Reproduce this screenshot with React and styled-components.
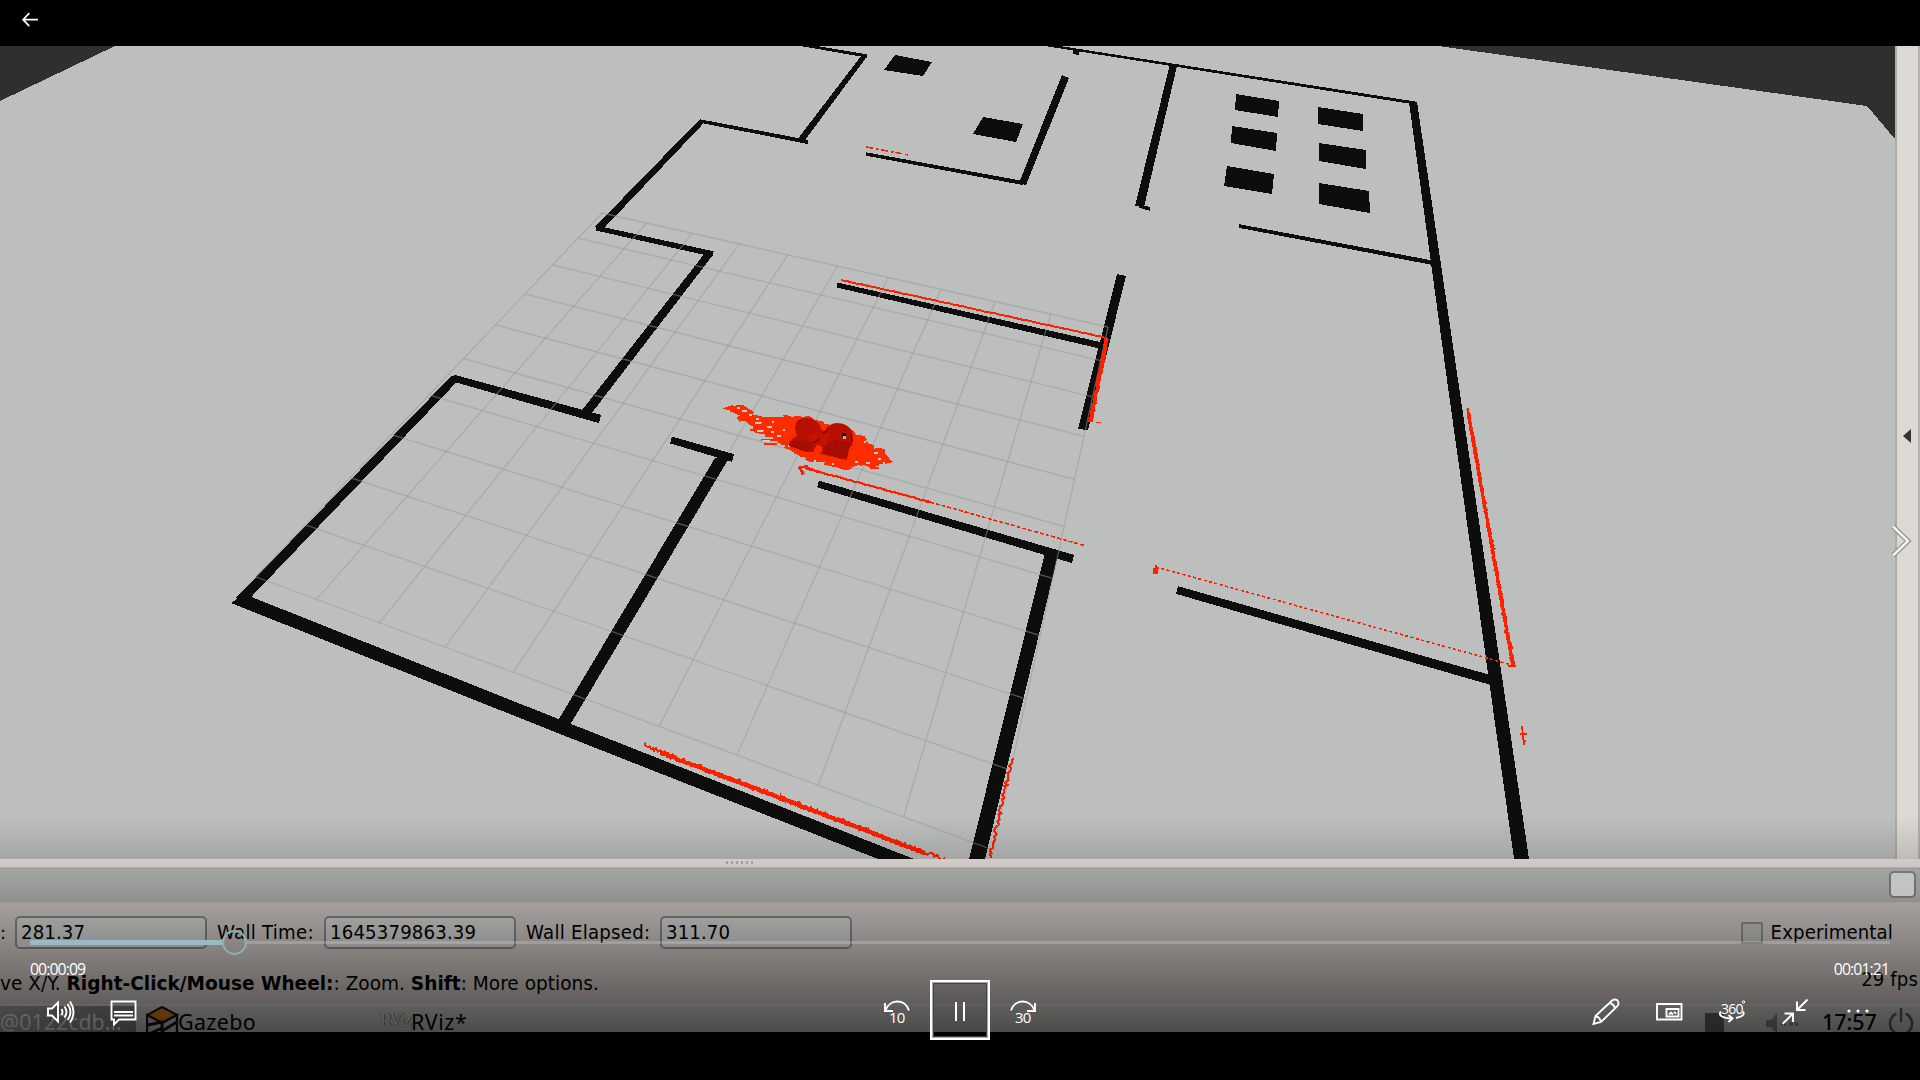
import React from "react";
import styled, { createGlobalStyle } from "styled-components";

const GlobalStyle = createGlobalStyle`
  * { box-sizing: border-box; }
  html, body { margin: 0; background: #000; overflow: hidden; }
`;

/* ---------- map geometry ---------- */

const WALL = "#0c0d0c";
const RED = "#ff2000";

const pts = (list) => list.map((p) => p.join(",")).join(" ");

// [x1, y1, thickness1, x2, y2, thickness2]
const walls = [
  [803, 45, 2.8, 867, 56, 3.2],
  [865, 55, 5, 801, 140, 6.5],
  [700, 121, 3.4, 808, 142, 4],
  [702, 121, 5.5, 598, 229, 7.5],
  [596, 228, 5, 713, 254, 5.5],
  [709, 254, 7.5, 585, 414, 9.5],
  [453, 378, 7, 600, 419, 8.5],
  [455, 378, 8, 240, 601, 10.5],
  [671, 440, 7, 733, 458, 8],
  [818, 484, 7, 1073, 559, 8.5],
  [837, 285, 5, 1103, 346, 6.5],
  [866, 154, 3.4, 1023, 183, 4],
  [1046, 45, 2.4, 1415, 103, 3],
  [1139, 206, 3.5, 1150, 209, 3.5],
  [1239, 226, 3.6, 1434, 263, 4.4],
  [1177, 590, 8, 1494, 681, 9.5],
];

const blocks = [
  [[231, 603], [244, 594], [566, 722], [914, 859], [878, 859], [560, 734]],
  [[715, 458], [729, 458], [570, 725], [553, 729]],
  [[1045, 553], [1058, 555], [985, 859], [969, 859]],
  [[1117, 274], [1126, 276], [1088, 430], [1078, 429]],
  [[1062, 75], [1069, 78], [1026, 185], [1019, 183]],
  [[1170, 64], [1177, 66], [1144, 207], [1135, 206]],
  [[1409, 102], [1417, 102], [1458, 380], [1529, 859], [1514, 859], [1447, 380]],
  [[1073, 50], [1080, 50], [1079, 55], [1073, 54]],
  [[895, 55], [932, 62], [923, 76], [884, 70]],
  [[983, 117], [1023, 124], [1016, 142], [973, 134]],
  [[1236, 94], [1279, 101], [1278, 117], [1235, 110]],
  [[1318, 107], [1363, 114], [1363, 131], [1318, 124]],
  [[1232, 126], [1277, 133], [1276, 151], [1231, 143]],
  [[1319, 143], [1366, 150], [1366, 169], [1319, 161]],
  [[1227, 166], [1274, 174], [1272, 194], [1224, 186]],
  [[1319, 183], [1369, 191], [1370, 213], [1319, 204]],
];

const wallPolygon = ([x1, y1, a, x2, y2, b]) => {
  const len = Math.hypot(x2 - x1, y2 - y1);
  const nx = -(y2 - y1) / len / 2;
  const ny = (x2 - x1) / len / 2;
  return [
    [x1 + nx * a, y1 + ny * a],
    [x2 + nx * b, y2 + ny * b],
    [x2 - nx * b, y2 - ny * b],
    [x1 - nx * a, y1 - ny * a],
  ];
};

// Projects the unit square onto the floor quadrilateral.
const projector = ([x0, y0], [x1, y1], [x2, y2], [x3, y3]) => {
  const dx1 = x1 - x2, dx2 = x3 - x2, sx = x0 - x1 + x2 - x3;
  const dy1 = y1 - y2, dy2 = y3 - y2, sy = y0 - y1 + y2 - y3;
  const det = dx1 * dy2 - dx2 * dy1;
  const g = (sx * dy2 - dx2 * sy) / det;
  const h = (dx1 * sy - sx * dy1) / det;
  return (u, v) => {
    const w = g * u + h * v + 1;
    return [
      ((x1 - x0 + g * x1) * u + (x3 - x0 + h * x3) * v + x0) / w,
      ((y1 - y0 + g * y1) * u + (y3 - y0 + h * y3) * v + y0) / w,
    ];
  };
};

const floor = projector([602, 213], [1108, 327], [993, 850], [256, 577]);
const steps = Array.from({ length: 11 }, (_, i) => i);
const gridRows = steps.map((i) => [floor(0, i / 10), floor(1, i / 10)]);
const gridColumns = steps.map((i) => [floor(i / 10, 0), floor(i / 10, 1)]);
// The middle column runs beneath the inner wall.
const coveredLines = [gridColumns[5]];
const openLines = [...gridRows, ...gridColumns.filter((_, i) => i !== 5)];

const noise = (seed) => {
  let s = seed;
  return () => {
    s = (s * 16807) % 2147483647;
    return s / 2147483647;
  };
};

// Short cross strokes scattered along a laser hit line.
const scan = (x1, y1, x2, y2, spread1, spread2, seed) => {
  const rnd = noise(seed);
  const len = Math.hypot(x2 - x1, y2 - y1);
  const n = Math.round(len / 1.7);
  const out = [];
  for (let i = 0; i <= n; i += 1) {
    const t = i / n;
    const sp = spread1 + (spread2 - spread1) * t;
    const nx = (-(y2 - y1) / len) * (rnd() - 0.5) * 2 * sp;
    const ny = ((x2 - x1) / len) * (rnd() - 0.5) * 2 * sp;
    out.push([(x1 + (x2 - x1) * t + nx).toFixed(1), (y1 + (y2 - y1) * t + ny).toFixed(1)]);
  }
  return out;
};

const scans = [
  { p: scan(643, 745, 947, 861, 2.4, 2.2, 11), w: 2 },
  { p: scan(660, 752.5, 925, 853, 0.7, 0.7, 15), w: 4.2 },
  { p: scan(1012, 758, 990, 858, 2, 2, 23), w: 2 },
  { p: scan(1468, 408, 1513, 666, 0.8, 2, 37), w: 2.4 },
  { p: scan(1468, 412, 1513, 666, 0.2, 0.4, 39), w: 3.4 },
  { p: scan(1107, 338, 1091, 420, 0.6, 0.9, 41), w: 3.8 },
  { p: scan(841, 280, 1107, 338, 0.3, 0.3, 43), w: 2 },
  { p: scan(805, 468, 930, 502, 0.5, 0.3, 47), w: 2.2 },
];

const cloudOutline = [
  [726, 408], [736, 404], [752, 408], [757, 416], [768, 418], [782, 417], [798, 416], [812, 417],
  [832, 424], [850, 430], [866, 437], [870, 446], [884, 450], [882, 454], [891, 462], [884, 464],
  [872, 467], [858, 465], [846, 470], [826, 465], [808, 460], [796, 454], [784, 449], [774, 439],
  [760, 434], [750, 427], [740, 418], [733, 411],
];

const cloudRnd = noise(97);
const jag = [];
cloudOutline.forEach((a, i) => {
  const b = cloudOutline[(i + 1) % cloudOutline.length];
  for (let k = 0; k < 4; k += 1) {
    const t = k / 4;
    jag.push([
      (a[0] + (b[0] - a[0]) * t + (cloudRnd() - 0.5) * 8).toFixed(1),
      (a[1] + (b[1] - a[1]) * t + (cloudRnd() - 0.5) * 3).toFixed(1),
    ]);
  }
});

const gaps = [
  [744, 411, 10], [738, 408, 6], [750, 415, 6], [758, 423, 14], [769, 427, 10], [760, 431, 14],
  [779, 436, 8], [766, 441, 14], [773, 422, 5], [789, 446, 5], [856, 462, 6], [868, 463, 7],
  [879, 459, 6], [876, 453, 7], [865, 442, 4], [833, 464, 3], [815, 461, 4], [884, 463, 4],
  [772, 432, 6], [784, 430, 4], [757, 419, 6],
];
const streaks = [
  [750, 429, 20], [763, 417, 14], [761, 439, 20], [764, 443, 13], [730, 410, 14], [870, 467, 9],
  [873, 450, 12], [762, 423, 9], [726, 408, 9],
];

/* ---------- page parts ---------- */

const Player = styled.main`
  position: relative;
  width: 1920px;
  height: 1080px;
  padding: 46px 0 48px;
  background: #000;
  overflow: hidden;
`;

const Frame = styled.section`
  display: flex;
  flex-direction: column;
  height: 986px;
  overflow: hidden;
  background: #e0dad6;
  color: #000;
  font: 18.15px/22px "DejaVu Sans", sans-serif;
  white-space: nowrap;
`;

const Viewport = styled.div`
  display: flex;
  height: 813px;
  flex: none;
`;

const MapCanvas = styled.svg`
  display: block;
  width: 1895px;
  height: 813px;
`;

const DockStrip = styled.aside`
  display: flex;
  flex-direction: column;
  align-items: center;
  width: 25px;
  padding: 383px 2px 0 0;
  background: #dcd8d3;
  border-left: 2px solid #aeaba7;
  border-right: 2px solid #b5b1ac;
`;

const DockArrow = styled.span`
  border: 7px solid transparent;
  border-left: 0;
  border-right: 8px solid #35342f;
`;

const Splitter = styled.div`
  display: flex;
  justify-content: center;
  height: 9px;
  flex: none;
  padding: 2px 441px 0 0;
  background: #f3eae6;
  border-bottom: 1px solid #d4d0cd;
`;

const Grip = styled.i`
  width: 27px;
  height: 3px;
  background: repeating-linear-gradient(90deg, #bfbab7 0 2px, transparent 2px 5px);
`;

const EmptyPanel = styled.div`
  display: flex;
  justify-content: flex-end;
  align-items: flex-start;
  height: 34px;
  flex: none;
  padding: 2px 4px 0;
  background: #c2c4c2;
  border-top: 1px solid #b5b6b5;
`;

const PanelButton = styled.span`
  width: 27px;
  height: 27px;
  border: 2px solid #8e8e8d;
  border-radius: 5px;
  background: linear-gradient(#eeeded, #fff);
`;

const TimeRow = styled.div`
  display: flex;
  align-items: center;
  height: 62px;
  flex: none;
  padding: 0 27px 2px 0;
  border-top: 1px solid #d4d0cd;
`;

const Tall = styled.span`
  display: inline-block;
  transform: scaleY(1.07);
  letter-spacing: ${(p) => p.$spacing || 0}px;
`;

const FieldLabel = styled.span`
  width: ${(p) => p.$width}px;
  padding-left: ${(p) => p.$indent}px;
`;

const TimeField = styled.span`
  width: 192px;
  height: 33px;
  padding: 4px 4px;
  border: 2px solid #93918e;
  border-radius: 5px;
  background: #e6e7e5;
`;

const Checkbox = styled.span`
  width: 22px;
  height: 22px;
  margin: 0 8px 0 auto;
  border: 2px solid #9c9c98;
  background: #d3d5ce;
`;

const StatusRow = styled.div`
  display: flex;
  justify-content: space-between;
  height: 40px;
  flex: none;
  padding: 9px 2px 0 0;
`;

const StatusText = styled.span`
  font-size: 18.55px;
`;

const Fps = styled.span`
  margin-top: -4px;
`;

const Taskbar = styled.footer`
  display: flex;
  height: 28px;
  flex: none;
  background: #dededc;
  border-top: 2px solid #ecebe9;
  font: 21.4px/32px "Noto Sans", sans-serif;
`;

const Task = styled.div`
  display: flex;
  width: ${(p) => p.$width}px;
  height: 34px;
  padding-left: ${(p) => p.$pad}px;
  letter-spacing: ${(p) => p.$spacing || 0}px;
  color: ${(p) => (p.$dim ? "#ffffff" : "#000")};
  background: ${(p) => (p.$dim ? "linear-gradient(90deg,#b0b0ae,#8e8e8c)" : "transparent")};
`;

const TaskIcon = styled.svg`
  width: 34px;
  height: 34px;
  flex: none;
  margin-right: ${(p) => p.$gap || 0}px;
`;

const RvizMark = styled.span`
  width: 31px;
  font: 400 18px/29px "Liberation Serif", serif;
  color: #fff;
  text-shadow: 0 0 1px #555, 1px 0 1px #777;
  letter-spacing: -1.3px;
`;

const Tray = styled.div`
  display: flex;
  margin-left: auto;
`;

const TrayBlock = styled.i`
  width: 19px;
  height: 24px;
  margin: 7px 42px 0 0;
  background: #6c6c6b;
`;

const TrayIcon = styled.svg`
  width: ${(p) => p.$width}px;
  height: 30px;
`;

const Clock = styled.span`
  width: 66px;
  font-weight: 500;
`;

/* ---------- player chrome ---------- */

const Shade = styled.div`
  position: absolute;
  left: 0;
  right: 0;
  top: 816px;
  height: 216px;
  background: linear-gradient(rgba(0, 0, 0, 0), rgba(0, 0, 0, 0.66));
`;

const BackButton = styled.button`
  position: absolute;
  left: 20px;
  top: 9px;
  display: flex;
  padding: 0;
  border: 0;
  background: none;
`;

const NextHint = styled.svg`
  position: absolute;
  left: 1887px;
  top: 520px;
  width: 28px;
  height: 42px;
`;

const Controls = styled.div`
  position: absolute;
  left: 0;
  right: 0;
  top: 930px;
  height: 112px;
  color: #fff;
  font-family: "Open Sans", sans-serif;
`;

const Seek = styled.div`
  display: flex;
  align-items: center;
  height: 25px;
  padding: 0 30px;
`;

const Played = styled.i`
  width: 192px;
  height: 5px;
  background: #9abac3;
`;

const Knob = styled.i`
  width: 25px;
  height: 25px;
  border: 2.5px solid #8fafb8;
  border-radius: 50%;
`;

const Remaining = styled.i`
  flex: 1;
  height: 3px;
  background: rgba(255, 255, 255, 0.2);
`;

const Times = styled.div`
  display: flex;
  justify-content: space-between;
  padding: 0 31px 0 30px;
  height: 25px;
  font-size: 15.8px;
  line-height: 28px;
  letter-spacing: -0.92px;
`;

const Buttons = styled.div`
  display: grid;
  grid-template-columns: 930px 60px 930px;
  height: 60px;
`;

const Group = styled.div`
  display: flex;
  align-items: center;
  justify-content: ${(p) => (p.$end ? "flex-end" : "flex-start")};
  padding: ${(p) => p.$pad};
`;

const Icon = styled.svg`
  display: block;
  width: ${(p) => p.$size || 32}px;
  height: ${(p) => p.$size || 32}px;
  margin-left: ${(p) => p.$gap || 0}px;
  margin-right: ${(p) => (p.$push ? "auto" : "0")};
  fill: none;
  stroke: #fff;
  stroke-width: 1.9;
  overflow: visible;
`;

const IconText = styled.text`
  fill: #fff;
  stroke: none;
  font: ${(p) => p.$size}px "Open Sans", sans-serif;
  letter-spacing: -0.8px;
`;

const PauseButton = styled.button`
  display: flex;
  align-items: center;
  justify-content: center;
  gap: 6px;
  padding: 0;
  border: 2px solid #fff;
  background: rgba(0, 0, 0, 0.06);
  box-shadow: inset 0 0 0 1px #a5a5a4, inset 0 0 0 2px #454544;
`;

const PauseBar = styled.i`
  width: 2px;
  height: 19px;
  margin-top: 2px;
  background: #fff;
`;

function GridLines({ lines }) {
  return (
    <g stroke="#989898" strokeOpacity="0.52" strokeWidth="1.3">
      {lines.map(([a, b], i) => (
        <line key={i} x1={a[0]} y1={a[1]} x2={b[0]} y2={b[1]} />
      ))}
    </g>
  );
}

function FloorMap() {
  return (
    <MapCanvas viewBox="0 46 1895 813">
      <rect x="0" y="46" width="1895" height="813" fill="#bdbfbe" />
      <GridLines lines={coveredLines} />
      <g shapeRendering="crispEdges">
        <polygon points="0,46 115,46 0,101" fill="#2f2f2e" />
        <polygon points="1438,46 1895,46 1895,139 1867,106" fill="#2f2f2e" />
        {walls.map((w, i) => (
          <polygon key={i} points={pts(wallPolygon(w))} fill={WALL} />
        ))}
        {blocks.map((b, i) => (
          <polygon key={i} points={pts(b)} fill={WALL} />
        ))}
      </g>
      <GridLines lines={openLines} />
      <g fill="none" stroke={RED} shapeRendering="crispEdges">
        {scans.map((s, i) => (
          <polyline key={i} points={pts(s.p)} strokeWidth={s.w} />
        ))}
        <path d="M866 147L909 155" strokeDasharray="7 3 3 2" strokeWidth="1.6" />
        <path d="M930 502L1086 546" strokeDasharray="4 2" strokeWidth="1.6" />
        <path d="M1156 567L1512 665" strokeDasharray="3 2.5" strokeWidth="1.6" />
        <path d="M1154 574v-5h3v5M1156 565v9" strokeWidth="2" />
        <path d="M1522 726L1524 745M1520 734h7M1523 741h3" strokeWidth="1.8" />
        <path d="M1088 421h5M1096 422.5h5" strokeWidth="1.6" />
        <path d="M798 468l10-2M800 469l4 5M804 467l10 3M803 471l-1 4M1508 666h8" strokeWidth="2.4" />
      </g>
      <g shapeRendering="crispEdges">
        <polygon points={pts(jag)} fill="#ff2c00" />
        {streaks.map(([x, y, w], i) => (
          <rect key={i} x={x} y={y} width={w} height="1.6" fill="#ff2c00" />
        ))}
        {gaps.map(([x, y, w], i) => (
          <path key={i} d={`M${x - w / 2} ${y}l${w / 2} -1l${w / 2} 1l-${w / 2} 1z`} fill="#d5cbc6" />
        ))}
      </g>
      <path
        d="M795 427q1-7 9-9q11-1 16 8l2 5l5-1q2-7 10-7q10 0 15 8q2 9 0 15l-4 1l-1 13q-8-1-13-3l-14-3l4-6l-6-5l-5 9q-9 0-14-3l-9-5q-1-5 7-8q-2-5-2-9z"
        fill="#b81000"
      />
      <path d="M806 436l16-5l8 3l-6 14l-8-4z" fill="#c41200" />
      <path d="M789 443q9-5 15-2q9 1 8 7l-5 4l-18-6zM822 448q8-7 13-8q8 2 16 2l-4 16q-13 0-22-5z" fill="#a50d00" />
      <path d="M822 433q5 0 6-6M813 443l7-4M851 434l1 7M797 423l4-3" stroke="#8b0c02" strokeWidth="2" fill="none" />
      <rect x="842" y="433" width="4" height="4" fill="#111" />
      <rect x="843" y="436" width="3" height="3" fill="#b7aaa5" />
    </MapCanvas>
  );
}

function RvizFrame() {
  return (
    <Frame>
      <Viewport>
        <FloorMap />
        <DockStrip>
          <DockArrow />
        </DockStrip>
      </Viewport>
      <Splitter>
        <Grip />
      </Splitter>
      <EmptyPanel>
        <PanelButton />
      </EmptyPanel>
      <TimeRow>
        <FieldLabel $width={15} $indent={-1}>:</FieldLabel>
        <TimeField><Tall $spacing={0.1}>281.37</Tall></TimeField>
        <FieldLabel $width={117} $indent={10}><Tall $spacing={0.25}>Wall Time:</Tall></FieldLabel>
        <TimeField><Tall $spacing={0.15}>1645379863.39</Tall></TimeField>
        <FieldLabel $width={144} $indent={10}><Tall $spacing={0.25}>Wall Elapsed:</Tall></FieldLabel>
        <TimeField><Tall $spacing={0.1}>311.70</Tall></TimeField>
        <Checkbox />
        <Tall $spacing={0.12}>Experimental</Tall>
      </TimeRow>
      <StatusRow>
        <StatusText>
          <Tall>
            ve X/Y. <b>Right-Click/Mouse Wheel:</b>: Zoom. <b>Shift</b>: More options.
          </Tall>
        </StatusText>
        <Fps><Tall $spacing={0.1}>29 fps</Tall></Fps>
      </StatusRow>
      <Taskbar>
        <Task $width={136} $pad={0} $dim>@0122cdb…</Task>
        <Task $width={244} $pad={10} $spacing={0.4}>
          <TaskIcon viewBox="0 0 34 34" $gap={-2}>
            <path d="M16 1L31 9L16 17L1 9z" fill="#f58a1a" stroke="#151515" strokeWidth="2" />
            <path d="M1 9v19l15 8l15-8V9L16 17z" fill="#d8d8d6" stroke="#151515" strokeWidth="2.4" />
            <path d="M2 19l14-3v9l15-9M3 28l13-6" stroke="#151515" strokeWidth="3" fill="none" />
          </TaskIcon>
          Gazebo
        </Task>
        <Task $width={120} $pad={0} $spacing={0.55}>
          <RvizMark>RViz</RvizMark>
          RViz*
        </Task>
        <Tray>
          <TrayBlock />
          <TrayIcon viewBox="0 0 56 30" $width={56}>
            <path d="M0 14h5l6-7v20l-6-6H0z" fill="#91918f" />
            <path d="M15 18h5M23 18h4M29 18h3" stroke="#8a8a88" strokeWidth="3" />
          </TrayIcon>
          <Clock>17:57</Clock>
          <TrayIcon viewBox="0 0 32 30" $width={32}>
            <path d="M8.500 7.500a11 11 0 1 0 9 0M13 2v14" fill="none" stroke="#666" strokeWidth="2.600" />
          </TrayIcon>
        </Tray>
      </Taskbar>
    </Frame>
  );
}

function PlayerControls() {
  return (
    <Controls>
      <Seek>
        <Played />
        <Knob />
        <Remaining />
      </Seek>
      <Times>
        <span>00:00:09</span>
        <span>00:01:21</span>
      </Times>
      <Buttons>
        <Group $pad="3px 18px 0 44px">
          <Icon viewBox="0 0 32 32">
            <path d="M4 12.500h4l6-6v19l-6-6H4zM17.500 13q2 3 0 6M20.500 10.500q4 5.500 0 11M23.500 8q6 8 0 16M26 5.500q7 10.500 0 21" />
          </Icon>
          <Icon viewBox="0 0 32 32" $gap={31}>
            <path d="M4.500 5.500h24v18H12l-5 5v-5H4.500zM7 16h19M7 19.500h19" />
          </Icon>
          <Icon viewBox="0 0 32 32" $gap={743}>
            <path d="M3 7v8h8M3.500 14.500C7 3 23 2 27 14.500" />
            <IconText x="7" y="27" $size={15}>10</IconText>
          </Icon>
        </Group>
        <PauseButton aria-label="Pause">
          <PauseBar />
          <PauseBar />
        </PauseButton>
        <Group $end $pad="3px 46px 0 17px">
          <Icon viewBox="0 0 32 32" $push>
            <path d="M28 7v8h-8M27.500 14.500C24 3 8 2 4 14.500" />
            <IconText x="8" y="27" $size={15}>30</IconText>
          </Icon>
          <Icon viewBox="0 0 32 32">
            <path d="M3.500 28l2-8L22 4.500q3-2 5.500 0q2 2.500 0 5.500L11 26zM5.500 20q4.500 1 5.500 6M19.500 7q4.500 1 5.500 5.500" />
          </Icon>
          <Icon viewBox="0 0 32 32" $gap={31}>
            <path d="M4 8h24.500v15.500H4zM13.500 13h12v7.500h-12zM16 18.500l2-2l2 2M21 15.500l2 2.500" />
          </Icon>
          <Icon viewBox="0 0 32 32" $gap={31}>
            <IconText x="5" y="18" $size={14}>360</IconText>
            <circle cx="27.500" cy="6" r="1.200" strokeWidth="1" />
            <path d="M5 15.500c-4 4 3 7 11 7M12.500 19l4 3.500l-4 3.500M20 22q10-2 7-6.500" />
          </Icon>
          <Icon viewBox="0 0 32 32" $gap={31}>
            <path d="M28.500 3.500L18 14M18 5.500v8.500h8.500M3.500 28L14 17.500M5.500 17.500H14V26" />
          </Icon>
          <Icon viewBox="0 0 32 32" $gap={31}>
            <g fill="#fff" stroke="none">
              <circle cx="7" cy="15" r="1.600" />
              <circle cx="16" cy="15" r="1.600" />
              <circle cx="25" cy="15" r="1.600" />
            </g>
          </Icon>
        </Group>
      </Buttons>
    </Controls>
  );
}

export default function App() {
  return (
    <>
      <GlobalStyle />
      <Player>
        <RvizFrame />
        <Shade />
        <BackButton aria-label="Back">
          <Icon viewBox="0 0 32 32" $size={22}>
            <path d="M13.500 6L4.500 15.500L13.500 25M4.500 15.500H26" strokeWidth="2.400" />
          </Icon>
        </BackButton>
        <NextHint viewBox="0 0 28 42">
          <path d="M6 6.500L21 21L6 35.500" fill="none" stroke="#8d8b89" strokeWidth="5" />
          <path d="M6 6.500L21 21L6 35.500" fill="none" stroke="#f4f2f0" strokeWidth="2.600" />
        </NextHint>
        <PlayerControls />
      </Player>
    </>
  );
}
